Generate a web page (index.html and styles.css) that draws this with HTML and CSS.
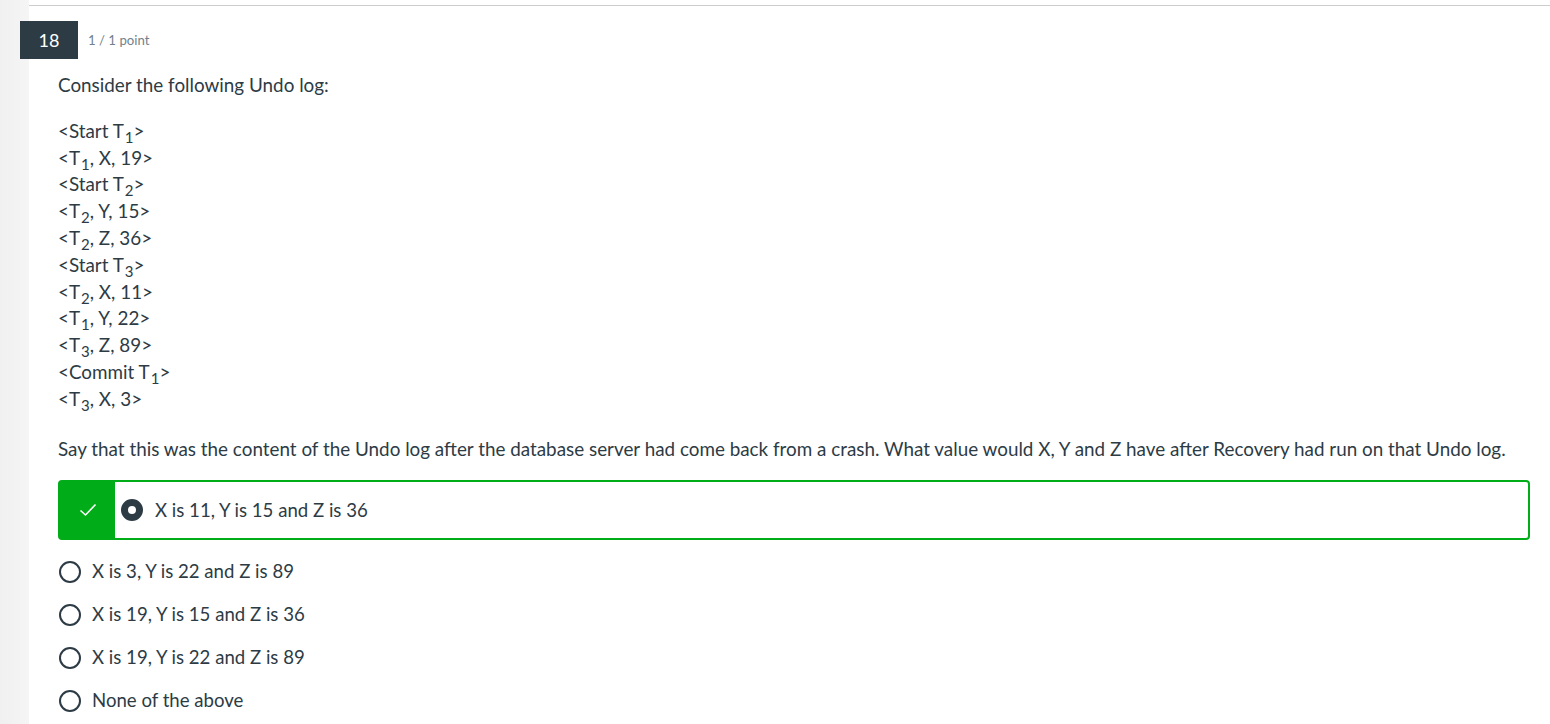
FILE: index.html
```html
<!DOCTYPE html>
<html>
<head>
<meta charset="utf-8">
<link rel="stylesheet" href="styles.css">
</head>
<body>
<div class="page">
  <div class="strip"></div>
  <main class="main">
    <section class="question">
      <header class="qhead">
        <div class="badge">18</div>
        <div class="points">1 / 1 point</div>
      </header>
      <div class="body">
        <p class="intro">Consider the following Undo log:</p>
        <div class="log">
          <div>&lt;Start T<sub>1</sub>&gt;</div>
          <div>&lt;T<sub>1</sub>, X, 19&gt;</div>
          <div>&lt;Start T<sub>2</sub>&gt;</div>
          <div>&lt;T<sub>2</sub>, Y, 15&gt;</div>
          <div>&lt;T<sub>2</sub>, Z, 36&gt;</div>
          <div>&lt;Start T<sub>3</sub>&gt;</div>
          <div>&lt;T<sub>2</sub>, X, 11&gt;</div>
          <div>&lt;T<sub>1</sub>, Y, 22&gt;</div>
          <div>&lt;T<sub>3</sub>, Z, 89&gt;</div>
          <div>&lt;Commit T<sub>1</sub>&gt;</div>
          <div>&lt;T<sub>3</sub>, X, 3&gt;</div>
        </div>
        <p class="prompt">Say that this was the content of the Undo log after the database server had come back from a crash. What value would X, Y and Z have after Recovery had run on that Undo log.</p>
        <div class="options">
          <div class="option correct">
            <div class="tick">
              <svg width="18" height="14" viewBox="0 0 18 14"><path d="M1.5 7.5 L6.5 12 L16.5 1.5" fill="none" stroke="#fff" stroke-width="1.6"/></svg>
            </div>
            <span class="radio selected"></span>
            <span class="label">X is 11, Y is 15 and Z is 36</span>
          </div>
          <div class="option">
            <span class="radio"></span>
            <span class="label">X is 3, Y is 22 and Z is 89</span>
          </div>
          <div class="option">
            <span class="radio"></span>
            <span class="label">X is 19, Y is 15 and Z is 36</span>
          </div>
          <div class="option">
            <span class="radio"></span>
            <span class="label">X is 19, Y is 22 and Z is 89</span>
          </div>
          <div class="option">
            <span class="radio"></span>
            <span class="label">None of the above</span>
          </div>
        </div>
      </div>
    </section>
  </main>
</div>
</body>
</html>
```
FILE: styles.css
```css
html, body {
  margin: 0;
  padding: 0;
  background: #fff;
}
body {
  font-family: Lato, "Liberation Sans", sans-serif;
  color: #2d3b45;
}
.page {
  display: flex;
  min-height: 724px;
}
.strip {
  width: 29px;
  flex: none;
  background: linear-gradient(to right, #f0f0f0, #f5f5f5);
}
.main {
  flex: 1;
  padding-top: 5px;
}
.question {
  border-top: 1px solid #cdcdcd;
}
.qhead {
  display: flex;
  align-items: center;
  margin-top: 15px;
  margin-left: -9px;
}
.badge {
  width: 58px;
  height: 38px;
  background: #2d3b45;
  color: #fff;
  font-size: 18px;
  display: flex;
  align-items: center;
  justify-content: center;
}
.points {
  margin-left: 10px;
  font-size: 13.2px;
  color: #73818c;
}
.body {
  padding: 0 20px 0 29px;
  font-size: 18.85px;
  line-height: 26.8px;
}
.intro {
  margin: 13px 0 0 0;
}
.log {
  margin-top: 19px;
}
.log sub {
  font-size: 15px;
  line-height: 0;
  vertical-align: -5px;
  margin-left: 1px;
}
.prompt {
  margin: 23px 0 0 0;
}
.options {
  margin-top: 18px;
  font-size: 18.6px;
}
.option {
  display: flex;
  align-items: center;
  height: 43px;
}
.option.correct {
  height: 56px;
  border: 2px solid #00ac18;
  border-radius: 4px;
  margin-bottom: 10px;
}
.tick {
  width: 55px;
  align-self: stretch;
  background: #00ac18;
  display: flex;
  align-items: center;
  justify-content: center;
  margin-right: 6px;
}
.radio {
  width: 22px;
  height: 22px;
  box-sizing: border-box;
  border: 2px solid #2d3b45;
  border-radius: 50%;
  flex: none;
  margin-left: 1px;
  margin-right: 11px;
}
.radio.selected {
  border-width: 7px;
  margin-left: 0;
  margin-right: 12px;
}
.label {
  white-space: nowrap;
}
```
